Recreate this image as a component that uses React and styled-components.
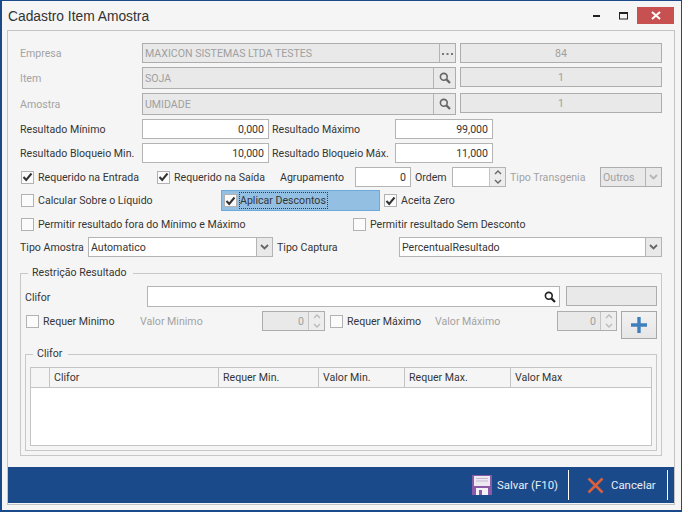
import React from 'react'
import styled, { createGlobalStyle } from 'styled-components'

const GlobalStyle = createGlobalStyle`
  html, body { margin: 0; padding: 0; }
  body {
    width: 682px;
    height: 512px;
    overflow: hidden;
    font-family: Roboto, "Liberation Sans", Arial, sans-serif;
    font-size: 10.6px;
    color: #353535;
  }
  * { box-sizing: border-box; }
`

const Window = styled.div`
  width: 682px;
  height: 512px;
  background: #f5f5f5;
  border: solid #1a4a8a;
  border-width: 1px 1px 2px 2px;
  display: flex;
  flex-direction: column;
`
const TitleBar = styled.div`
  height: 29px;
  flex: none;
  display: flex;
  align-items: flex-start;
  padding: 0 7px 0 6px;
`
const Title = styled.div`
  font-family: "Liberation Sans", Arial, sans-serif;
  font-size: 13.8px;
  line-height: 15px;
  margin-top: 8px;
  color: #333;
  flex: 1;
`
const WinBtn = styled.div`
  width: ${p => p.$w}px;
  height: 17px;
  margin-top: 6px;
  flex: none;
  display: flex;
  align-items: center;
  justify-content: center;
  background: ${p => p.$bg || 'transparent'};
`
const Body = styled.div`
  margin: 0 6px 0 5px;
  height: 475px;
  border: 1px solid #c4c4c4;
  display: flex;
  flex-direction: column;
`
const Content = styled.div`
  flex: 1;
  padding: 12px 0 0 12px;
`
const Row = styled.div`
  display: flex;
  align-items: ${p => p.$align || 'center'};
  height: ${p => p.$h}px;
  margin-top: ${p => p.$mt || 0}px;
  margin-left: ${p => p.$ml || 0}px;
`
const Label = styled.div`
  width: ${p => p.$w}px;
  flex: none;
  white-space: nowrap;
  line-height: ${p => p.$lh || 14}px;
  padding: 2px 0 0 ${p => p.$pl || 0}px;
  color: ${p => (p.$off ? '#a3a3a3' : '#353535')};
`
const Field = styled.div`
  width: ${p => p.$w}px;
  height: ${p => p.$h || 20}px;
  margin-left: ${p => p.$ml || 0}px;
  flex: none;
  display: flex;
  align-items: center;
  border: 1px solid ${p => (p.$off ? '#adadad' : '#b4b4b4')};
  background: ${p => (p.$off ? '#e9e9e9' : '#fff')};
  color: ${p => (p.$off ? '#a0a0a0' : '#353535')};
  overflow: hidden;
`
const FieldText = styled.div`
  flex: 1;
  min-width: 0;
  padding: 0 ${p => (p.$center ? 0 : p.$right ? 4 : 2)}px;
  white-space: nowrap;
  text-align: ${p => (p.$center ? 'center' : p.$right ? 'right' : 'left')};
`
const SideBtn = styled.div`
  width: ${p => p.$w || 22}px;
  height: 100%;
  flex: none;
  display: flex;
  align-items: center;
  justify-content: center;
  border-left: 1px solid ${p => (p.$bare ? 'transparent' : '#b4b4b4')};
  background: ${p => (p.$bare ? '#fff' : '#e9e9e9')};
`
const SpinBox = styled.div`
  width: 16px;
  height: 100%;
  flex: none;
  display: flex;
  flex-direction: column;
  border-left: 1px solid #c4c4c4;
  background: #ededed;
`
const SpinPart = styled.div`
  flex: 1;
  display: flex;
  align-items: center;
  justify-content: center;
`
const CheckWrap = styled.div`
  display: flex;
  align-items: center;
  flex: none;
  width: ${p => p.$w}px;
  margin-left: ${p => p.$ml || 0}px;
  height: ${p => p.$h ? p.$h + 'px' : '100%'};
`
const Box = styled.div`
  width: 13px;
  height: 13px;
  flex: none;
  margin-right: 4px;
  border: 1px solid #b2b2b2;
  background: #fbfbfb;
  display: flex;
  align-items: center;
  justify-content: center;
`
const Highlight = styled.div`
  width: 159px;
  height: 21px;
  flex: none;
  display: flex;
  align-items: center;
  padding-left: 2px;
  background: #93bfe2;
  border: 1px solid #6fa8dc;
`
const Focused = styled.div`
  border: 1px dotted #3a3a3a;
  height: 17px;
  line-height: 15px;
  margin-left: -2px;
  padding: 0 1px 0 0;
  white-space: nowrap;
`
const Group = styled.div`
  position: relative;
  width: ${p => p.$w}px;
  height: ${p => p.$h}px;
  margin-top: ${p => p.$mt}px;
  border: 1px solid #c8c8c8;
  padding: ${p => p.$pad};
`
const Legend = styled.div`
  position: absolute;
  top: -9px;
  left: 7px;
  padding: 0 6px 0 4px;
  line-height: 15px;
  background: #f5f5f5;
  white-space: nowrap;
`
const PlusBtn = styled.div`
  width: 36px;
  height: 28px;
  margin-left: 4px;
  flex: none;
  border: 1px solid #a8a8a8;
  background: linear-gradient(#f2f2f2, #e6e6e6);
  display: flex;
  align-items: center;
  justify-content: center;
`
const Grid = styled.div`
  height: 79px;
  border: 1px solid #c4c4c4;
  background: #fff;
`
const GridHead = styled.div`
  height: 20px;
  display: flex;
  background: #f5f5f5;
  border-bottom: 1px solid #c4c4c4;
`
const HeadCell = styled.div`
  width: ${p => p.$w}px;
  flex: ${p => (p.$grow ? 1 : 'none')};
  padding-left: 4px;
  line-height: 20px;
  border-right: ${p => (p.$grow ? 'none' : '1px solid #c4c4c4')};
  white-space: nowrap;
`
const Footer = styled.div`
  height: 36px;
  flex: none;
  background: #1a4a8a;
  display: flex;
  align-items: center;
  justify-content: flex-end;
  color: #e8eef6;
  font-size: 11.4px;
  margin-bottom: 1px;
`
const FootBtn = styled.div`
  width: ${p => p.$w}px;
  height: 30px;
  display: flex;
  align-items: center;
  flex: none;
  padding-left: ${p => p.$pl}px;
  border-right: 1px solid #fff;
  margin-right: ${p => p.$mr || 0}px;
`
const FootText = styled.span`
  margin-left: ${p => p.$ml}px;
  white-space: nowrap;
`

const Tick = () => (
  <svg width="11" height="10" viewBox="0 0 11 10">
    <path d="M1.5 5 L4.2 8 L9.5 1.5" fill="none" stroke="#333" strokeWidth="2" />
  </svg>
)
const Check = ({ on, w, ml, children }) => (
  <CheckWrap $w={w} $ml={ml}>
    <Box>{on && <Tick />}</Box>
    {children}
  </CheckWrap>
)
const Lens = ({ color = '#666' }) => (
  <svg width="12" height="12" viewBox="0 0 12 12">
    <circle cx="4.8" cy="4.8" r="3.4" fill="none" stroke={color} strokeWidth="1.6" />
    <path d="M7.4 7.4 L11 11" stroke={color} strokeWidth="2.2" />
  </svg>
)
const Dots = () => (
  <svg width="11" height="3" viewBox="0 0 11 3">
    <path d="M0 1h2v2H0zM4.5 1h2v2h-2zM9 1h2v2H9z" fill="#777" />
  </svg>
)
const Chevron = ({ color = '#666' }) => (
  <svg width="9" height="6" viewBox="0 0 9 6">
    <path d="M1 1 L4.5 4.5 L8 1" fill="none" stroke={color} strokeWidth="1.8" />
  </svg>
)
const Spin = ({ color = '#666' }) => (
  <SpinBox>
    <SpinPart>
      <svg width="8" height="5" viewBox="0 0 8 5"><path d="M1 4 L4 1 L7 4" fill="none" stroke={color} strokeWidth="1.4" /></svg>
    </SpinPart>
    <SpinPart>
      <svg width="8" height="5" viewBox="0 0 8 5"><path d="M1 1 L4 4 L7 1" fill="none" stroke={color} strokeWidth="1.4" /></svg>
    </SpinPart>
  </SpinBox>
)
const SaveIcon = () => (
  <svg width="20" height="20" viewBox="0 0 20 20">
    <rect width="20" height="20" fill="#8a5aa8" />
    <rect x="2" y="1" width="16" height="10" fill="#eceaf0" />
    <path d="M4 3.5h12M4 6h12" stroke="#c4b4d2" strokeWidth="1" />
    <rect x="4" y="13" width="12" height="7" fill="#f4f2f6" />
    <rect x="7" y="15" width="3" height="5" fill="#8a5aa8" />
  </svg>
)
const CloseIcon = () => (
  <svg width="17" height="17" viewBox="0 0 17 17">
    <path d="M1.5 1.5 L15.5 15.5 M15.5 1.5 L1.5 15.5" stroke="#d9603c" strokeWidth="2.6" />
  </svg>
)

export default function App() {
  return (
    <>
      <GlobalStyle />
      <Window>
        <TitleBar>
          <Title>Cadastro Item Amostra</Title>
          <WinBtn $w={24}>
            <svg width="8" height="3" viewBox="0 0 8 3"><rect y="1" width="7" height="2" fill="#222" /></svg>
          </WinBtn>
          <WinBtn $w={28}>
            <svg width="9" height="8" viewBox="0 0 9 8"><rect x="0.5" y="0.5" width="8" height="6.5" fill="none" stroke="#222" /><rect width="9" height="2" fill="#222" /></svg>
          </WinBtn>
          <WinBtn $w={37} $bg="#c75050">
            <svg width="10" height="9" viewBox="0 0 10 9"><path d="M1 1 L9 8 M9 1 L1 8" stroke="#fff" strokeWidth="2" /></svg>
          </WinBtn>
        </TitleBar>
        <Body>
          <Content>
            <Row $h={20}>
              <Label $w={122} $off>Empresa</Label>
              <Field $w={314} $off>
                <FieldText>MAXICON SISTEMAS LTDA TESTES</FieldText>
                <SideBtn $w={16}><Dots /></SideBtn>
              </Field>
              <Field $w={202} $ml={4} $off><FieldText $center>84</FieldText></Field>
            </Row>
            <Row $h={22} $mt={4} $align="flex-start">
              <Label $w={122} $lh={20} $off>Item</Label>
              <Field $w={314} $h={22} $off>
                <FieldText>SOJA</FieldText>
                <SideBtn><Lens /></SideBtn>
              </Field>
              <Field $w={202} $ml={4} $off><FieldText $center>1</FieldText></Field>
            </Row>
            <Row $h={22} $mt={4} $align="flex-start">
              <Label $w={122} $lh={20} $off>Amostra</Label>
              <Field $w={314} $h={22} $off>
                <FieldText>UMIDADE</FieldText>
                <SideBtn><Lens /></SideBtn>
              </Field>
              <Field $w={202} $ml={4} $off><FieldText $center>1</FieldText></Field>
            </Row>
            <Row $h={20} $mt={4}>
              <Label $w={122}>Resultado Mínimo</Label>
              <Field $w={127}><FieldText $right>0,000</FieldText></Field>
              <Label $w={126} $pl={3}>Resultado Máximo</Label>
              <Field $w={98}><FieldText $right>99,000</FieldText></Field>
            </Row>
            <Row $h={20} $mt={4}>
              <Label $w={122}>Resultado Bloqueio Min.</Label>
              <Field $w={127}><FieldText $right>10,000</FieldText></Field>
              <Label $w={126} $pl={3}>Resultado Bloqueio Máx.</Label>
              <Field $w={98}><FieldText $right>11,000</FieldText></Field>
            </Row>
            <Row $h={20} $mt={4} $ml={1}>
              <Check on w={136}>Requerido na Entrada</Check>
              <Check on w={123}>Requerido na Saída</Check>
              <Label $w={75}>Agrupamento</Label>
              <Field $w={56}><FieldText $right>0</FieldText></Field>
              <Label $w={41} $pl={4}>Ordem</Label>
              <Field $w={54}><FieldText /><Spin /></Field>
              <Label $w={94} $pl={4} $off>Tipo Transgenia</Label>
              <Field $w={62} $off>
                <FieldText>Outros</FieldText>
                <SideBtn $w={16}><Chevron color="#b5b5b5" /></SideBtn>
              </Field>
            </Row>
            <Row $h={21} $mt={3} $ml={1}>
              <Check w={200}>Calcular Sobre o Líquido</Check>
              <Highlight>
                <Box><Tick /></Box>
                <Focused>Aplicar Descontos</Focused>
              </Highlight>
              <Check on w={120} ml={4}>Aceita Zero</Check>
            </Row>
            <Row $h={20} $mt={3} $ml={1}>
              <Check w={332}>Permitir resultado fora do Mínimo e Máximo</Check>
              <Check w={200}>Permitir resultado Sem Desconto</Check>
            </Row>
            <Row $h={20} $mt={3}>
              <Label $w={68}>Tipo Amostra</Label>
              <Field $w={185}>
                <FieldText>Automatico</FieldText>
                <SideBtn $w={16}><Chevron /></SideBtn>
              </Field>
              <Label $w={126} $pl={4}>Tipo Captura</Label>
              <Field $w={263}>
                <FieldText>PercentualResultado</FieldText>
                <SideBtn $w={16}><Chevron /></SideBtn>
              </Field>
            </Row>
            <Group $w={642} $h={183} $mt={16} $pad="12px 0 0 4px">
              <Legend>Restrição Resultado</Legend>
              <Row $h={21} $align="flex-start">
                <Label $w={122} $lh={19}>Clifor</Label>
                <Field $w={413} $h={21}>
                  <FieldText />
                  <SideBtn $w={20} $bare><Lens color="#222" /></SideBtn>
                </Field>
                <Field $w={91} $ml={6} $off />
              </Row>
              <Row $h={28} $mt={4} $align="flex-start" $ml={1}>
                <CheckWrap $w={114} $h={20}><Box />Requer Minimo</CheckWrap>
                <Label $w={122} $lh={18} $off>Valor Minimo</Label>
                <Field $w={63} $off><FieldText $right>0</FieldText><Spin color="#bbb" /></Field>
                <CheckWrap $w={105} $ml={5} $h={20}><Box />Requer Máximo</CheckWrap>
                <Label $w={122} $lh={18} $off>Valor Máximo</Label>
                <Field $w={60} $off><FieldText $right>0</FieldText><Spin color="#bbb" /></Field>
                <PlusBtn>
                  <svg width="18" height="18" viewBox="0 0 18 18"><path d="M9 1v16M1 9h16" stroke="#3f7fbd" strokeWidth="3.4" /></svg>
                </PlusBtn>
              </Row>
              <Group $w={632} $h={97} $mt={15} $pad="12px 4px 0 4px">
                <Legend>Clifor</Legend>
                <Grid>
                  <GridHead>
                    <HeadCell $w={19} />
                    <HeadCell $w={169}>Clifor</HeadCell>
                    <HeadCell $w={100}>Requer Min.</HeadCell>
                    <HeadCell $w={86}>Valor Min.</HeadCell>
                    <HeadCell $w={106}>Requer Max.</HeadCell>
                    <HeadCell $grow>Valor Max</HeadCell>
                  </GridHead>
                </Grid>
              </Group>
            </Group>
          </Content>
          <Footer>
            <FootBtn $w={105} $pl={8}>
              <SaveIcon />
              <FootText $ml={5}>Salvar (F10)</FootText>
            </FootBtn>
            <FootBtn $w={99} $pl={18} $mr={6}>
              <CloseIcon />
              <FootText $ml={7}>Cancelar</FootText>
            </FootBtn>
          </Footer>
        </Body>
      </Window>
    </>
  )
}
